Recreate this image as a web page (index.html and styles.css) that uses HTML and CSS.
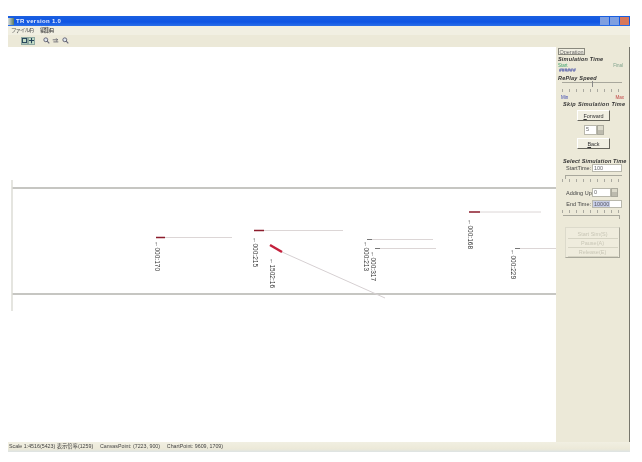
FILE: index.html
```html
<!DOCTYPE html>
<html lang="ja">
<head>
<meta charset="utf-8">
<title>TR version 1.0</title>
<link rel="stylesheet" href="styles.css">
</head>
<body>
<div class="window">
  <header class="titlebar">
    <div class="title"><span class="app-icon"></span>TR version 1.0</div>
    <div class="win-controls"><span class="wc"></span><span class="wc"></span><span class="wc close"></span></div>
  </header>
  <nav class="menubar"><span>ファイル(F)</span><span class="strong">編集(E)</span></nav>
  <div class="toolbar">
    <span class="tool green"><svg viewBox="0 0 10 10"><rect x="2" y="2" width="6" height="6" fill="none" stroke="#26445a" stroke-width="1.600"/></svg></span>
    <span class="tool green"><svg viewBox="0 0 10 10"><path d="M5 1v8M1 5h8" stroke="#26445a" stroke-width="1.600"/></svg></span>
    <span class="tool gap"><svg viewBox="0 0 10 10"><circle cx="4" cy="4" r="2.800" fill="#dfe6ee" stroke="#556" stroke-width="1.200"/><path d="M6 6l3 3" stroke="#667" stroke-width="1.600"/></svg></span>
    <span class="tool near"><svg viewBox="0 0 10 10"><path d="M1 4h7M6 2l2 2-2 2M9 7H2" fill="none" stroke="#445" stroke-width="1"/></svg></span>
    <span class="tool near"><svg viewBox="0 0 10 10"><circle cx="4" cy="4" r="2.800" fill="#dfe6ee" stroke="#556" stroke-width="1.200"/><path d="M6 6l3 3" stroke="#667" stroke-width="1.600"/></svg></span>
  </div>
  <div class="workspace">
    <svg class="canvas" viewBox="0 0 548 395" aria-label="road canvas">
      <g transform="translate(-8 -47)">
        <path class="road" d="M12 188H556M12 294H556"/>
        <path class="road-end" d="M12 180V311"/>
        <path class="trail" d="M165 237.500H232M264 230.500H343M367 239.500H433M375 248.500H436M480 212H541M515 248.500H556"/>
        <path class="trail-diag" d="M282 252L385 298"/>
        <path class="car" d="M156 237.500H165M254 230.500H264M469 212H480"/>
        <path class="car thick" d="M270 245L282 252"/>
        <path class="head" d="M367 239.500H372M375 248.500H380M515 248.500H520"/>
        <text class="vlabel" transform="translate(155 241) rotate(90)">←000:170</text>
        <text class="vlabel" transform="translate(253 237) rotate(90)">←000:215</text>
        <text class="vlabel" transform="translate(270 258) rotate(90)">←1502:16</text>
        <text class="vlabel" transform="translate(364 241) rotate(90)">←000:213</text>
        <text class="vlabel" transform="translate(371 251) rotate(90)">←000:317</text>
        <text class="vlabel" transform="translate(468 219) rotate(90)">←000:168</text>
        <text class="vlabel" transform="translate(511 249) rotate(90)">←000:229</text>
      </g>
    </svg>
    <aside class="panel">
      <div class="tab">Operation</div>
      <h3 class="sim">Simulation Time</h3>
      <div class="ends first"><span class="start">Start</span><span class="final">Final</span></div>
      <div class="progress">######</div>
      <h3 class="replay">RePlay Speed</h3>
      <div class="slider speed"><span class="thumb"></span></div>
      <div class="ticks"></div>
      <div class="ends minmax"><span class="min">Min</span><span class="max">Max</span></div>
      <h3 class="center">Skip Simulation Time</h3>
      <button class="btn"><u>F</u>orward</button>
      <div class="spin small"><span class="field">5</span><span class="arrows"></span></div>
      <button class="btn"><u>B</u>ack</button>
      <h3 class="center select">Select Simulation Time</h3>
      <div class="row"><label>StartTime:</label><span class="field wide">100</span></div>
      <div class="slider plain"></div>
      <div class="ticks"></div>
      <div class="row adding"><label>Adding Up:</label><span class="spin"><span class="field">0</span><span class="arrows"></span></span></div>
      <div class="row"><label>End Time:</label><span class="field wide sel">10000</span></div>
      <div class="ticks after-end"></div>
      <div class="slider plain low"></div>
      <div class="group">
        <span>Start Sim(S)</span>
        <span>Pause(A)</span>
        <span>Release(E)</span>
      </div>
    </aside>
  </div>
  <footer class="status">Scale 1:4516(5423) 表示倍率(1259)　 CanvasPoint: (7223, 900)　 ChartPoint: 9609, 1709)</footer>
</div>
</body>
</html>
```
FILE: styles.css
```css
* { box-sizing: border-box; }
html, body { margin: 0; height: 100%; background: #fff; }
body {
  padding: 16px 12px 10px 8px;
  font-family: "Liberation Sans", "Noto Sans CJK JP", sans-serif;
  overflow: hidden;
}
.window {
  width: 622px;
  height: 436px;
  display: flex;
  flex-direction: column;
  background: #ece9d8;
  filter: blur(0.45px);
}
.titlebar {
  height: 10px;
  display: flex;
  justify-content: space-between;
  align-items: center;
  background: linear-gradient(#1a5fe0, #0f55e4 60%, #2a6fe8);
  color: #e8eefc;
  flex: none;
}
.title { font-size: 6px; font-weight: bold; display: flex; align-items: center; letter-spacing: 0.3px; }
.app-icon { width: 6px; height: 7px; margin-right: 2px; background: linear-gradient(90deg, #d8dde0, #5a7a60); }
.win-controls { display: flex; gap: 1px; padding-right: 1px; }
.wc { width: 9px; height: 8px; background: #7f9fe0; }
.wc.close { background: #d8785a; }
.menubar {
  height: 9px;
  padding: 1px 0 0 3px;
  display: flex;
  gap: 7px;
  font-size: 5.500px;
  letter-spacing: -1px;
  line-height: 7px;
  color: #555;
  background: #f1efe2;
  flex: none;
}
.menubar .strong { color: #333; }
.toolbar {
  height: 12px;
  padding: 2px 0 1px 13px;
  display: flex;
  background: #ece9d8;
  flex: none;
}
.tool { width: 7px; height: 8px; display: block; flex: none; }
.tool svg { display: block; width: 7px; height: 7px; }
.tool.green { background: #c3dcc6; outline: 1px solid #8fa8a0; outline-offset: -1px; }
.tool.gap { margin-left: 8px; }
.tool.near { margin-left: 2px; }
.tool.near + .near { margin-left: 3px; }
.workspace { flex: 1; display: flex; min-height: 0; }
.canvas { width: 548px; height: 395px; display: block; background: #fff; flex: none; }
.road { stroke: #c6c6c2; stroke-width: 2; fill: none; }
.road-end { stroke: #dcdcd6; stroke-width: 1.500; fill: none; }
.trail { stroke: #dcd6d6; stroke-width: 1; fill: none; }
.trail-diag { stroke: #d6d0d2; stroke-width: 1; fill: none; }
.car { stroke: #8c1c2c; stroke-width: 1.500; fill: none; }
.car.thick { stroke: #c4203c; stroke-width: 2.500; }
.head { stroke: #777; stroke-width: 1; fill: none; }
.vlabel { font-size: 6.500px; fill: #333; font-family: "Liberation Sans", sans-serif; }
.panel {
  width: 74px;
  padding: 1px 2px 0 2px;
  display: flex;
  flex-direction: column;
  font-size: 5.500px;
  line-height: 6px;
  color: #555;
  background: #ece9d8;
  border-right: 1px solid #77766c;
  flex: none;
}
.tab {
  width: 27px;
  height: 7px;
  line-height: 6px;
  text-align: center;
  color: #666;
  background: #f1efe2;
  border: 1px solid #8a897e;
}
.panel h3 {
  margin: 1px 0 0;
  font-size: 5.500px;
  line-height: 6px;
  font-style: italic;
  font-weight: bold;
  letter-spacing: 0.2px;
  color: #333;
  white-space: nowrap;
}
.panel h3.sim { margin-top: 1px; }
.panel h3.center { margin: 1px 0 0 5px; letter-spacing: 0.35px; }
.panel h3.select { margin-top: 9px; letter-spacing: 0.15px; }
.panel h3.replay { margin-top: 2px; }
.ends { display: flex; justify-content: space-between; padding-right: 4px; font-size: 4.500px; line-height: 5px; }
.ends.first { margin-top: 1px; }
.start { color: #3aa06a; }
.final { color: #7fa38c; }
.progress { margin: 0 0 0 1px; color: #4650a8; font-size: 5px; line-height: 5px; font-weight: bold; }
.slider { position: relative; height: 4px; margin: 1px 5px 0 4px; border-top: 1px solid #a8a79c; }
.slider.speed { height: 7px; }
.slider.plain { margin: 3px 5px 0 7px; border-left: 1px solid #a8a79c; }
.slider.low { margin: 2px 7px 8px 5px; border-left: 0; border-right: 1px solid #a8a79c; }
.thumb { position: absolute; left: 30px; top: -2px; width: 1px; height: 6px; background: #888; }
.ticks {
  height: 3px;
  margin: 0 5px 0 4px;
  background: repeating-linear-gradient(90deg, #aaa9a0 0 1px, transparent 1px 7px);
}
.ticks.after-end { margin-top: 2px; }
.minmax { margin-top: 3px; padding: 0 3px; }
.min { color: #3a46b0; }
.max { color: #c04040; }
.btn {
  display: block;
  width: 33px;
  height: 11px;
  margin: 3px 0 0 19px;
  padding: 0;
  font: inherit;
  line-height: 8px;
  color: #333;
  background: #f1efe2;
  border: 1px solid;
  border-color: #fff #66655c #66655c #fff;
}
.spin { display: flex; }
.spin.small { margin: 4px 0 0 26px; height: 10px; width: 20px; }
.spin.small .field { height: 10px; }
.field {
  display: block;
  flex: 1;
  padding-left: 1px;
  height: 9px;
  line-height: 7px;
  color: #666;
  background: #fff;
  border: 1px solid #b9b8ac;
}
.arrows { width: 7px; background: linear-gradient(#dcdacb 50%, #bdbbae 50%); border: 1px solid #aaa99c; }
.row { display: flex; align-items: center; margin-top: 3px; padding-left: 8px; white-space: nowrap; }
.row label { width: 25px; flex: none; text-align: right; margin-right: 1px; color: #444; }
.panel .select + .row { margin-top: 0; }
.field.wide { flex: none; width: 30px; height: 8px; }
.field.sel { color: #556; background: linear-gradient(90deg, #c9cfe6 60%, #fff 60%); }
.row.adding { margin-top: 6px; }
.adding .spin { width: 26px; }
.group {
  margin: 0 0 0 7px;
  width: 55px;
  height: 31px;
  padding: 2px 0;
  display: flex;
  flex-direction: column;
  justify-content: space-between;
  align-items: center;
  color: #c8c6b6;
  background: #efecdd;
  border: 1px solid;
  border-color: #dcdacb #a8a79a #a8a79a #dcdacb;
}
.group span { width: 50px; text-align: center; border-bottom: 1px solid #d6d4c4; height: 9px; line-height: 8px; }
.status {
  height: 10px;
  padding: 1px 0 0 1px;
  font-size: 5.300px;
  line-height: 7px;
  white-space: nowrap;
  color: #444;
  background: linear-gradient(#f1efe2, #ece9d8 70%, #dde3e4);
  flex: none;
}
```
